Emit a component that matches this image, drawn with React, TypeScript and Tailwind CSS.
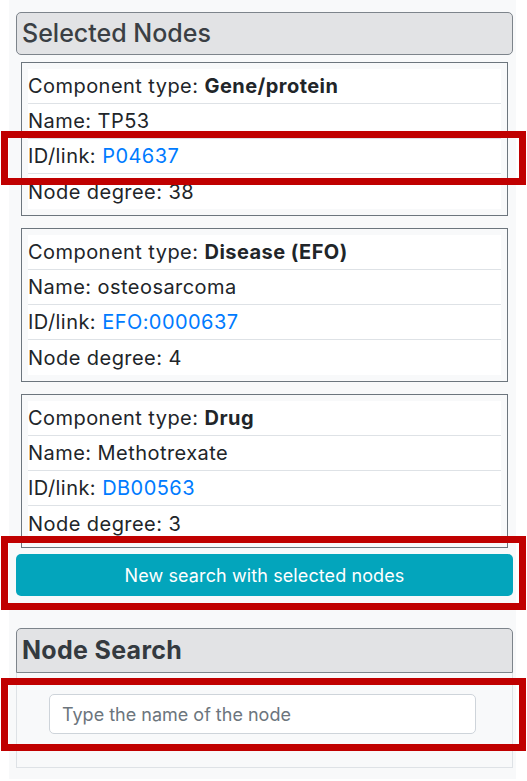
import React from "react";

type Row = { label: string; value: string; kind?: "bold" | "link" };

const nodes: Row[][] = [
  [
    { label: "Component type:", value: "Gene/protein", kind: "bold" },
    { label: "Name:", value: "TP53" },
    { label: "ID/link:", value: "P04637", kind: "link" },
    { label: "Node degree:", value: "38" },
  ],
  [
    { label: "Component type:", value: "Disease (EFO)", kind: "bold" },
    { label: "Name:", value: "osteosarcoma" },
    { label: "ID/link:", value: "EFO:0000637", kind: "link" },
    { label: "Node degree:", value: "4" },
  ],
  [
    { label: "Component type:", value: "Drug", kind: "bold" },
    { label: "Name:", value: "Methotrexate" },
    { label: "ID/link:", value: "DB00563", kind: "link" },
    { label: "Node degree:", value: "3" },
  ],
];

function NodeCard({ rows }: { rows: Row[] }) {
  return (
    <div className="border border-[#6c757d] bg-[#f8f9fa] px-[6px] py-[6px]">
      {rows.map((r, i) => (
        <div
          key={i}
          className={`h-[35px] bg-white flex items-center whitespace-nowrap text-[20px] tracking-[0.45px] text-[#212529] ${
            i < rows.length - 1 ? "border-b border-[#dee2e6]" : ""
          }`}
        >
          <span>{r.label}&nbsp;</span>
          {r.kind === "bold" && <b className="font-bold">{r.value}</b>}
          {r.kind === "link" && <a className="text-[#007bff]">{r.value}</a>}
          {!r.kind && <span>{r.value}</span>}
        </div>
      ))}
    </div>
  );
}

// red highlight frames drawn over the screenshot
function Mark({ top, height }: { top: number; height: number }) {
  return (
    <div
      className="absolute left-[1px] w-[525px] border-[7px] border-[#c00000] pointer-events-none"
      style={{ top, height }}
    />
  );
}

export default function App() {
  return (
    <div className="relative w-[527px] h-[781px] bg-white font-['Inter',sans-serif]">
      <div className="ml-[9px] w-[507px] h-[779px] bg-[#f8f9fa] pt-3 pl-[7px]">
        <div className="w-[497px]">
          <div className="h-[43px] rounded-[5px] border border-[#7d848b] bg-[#e2e3e5] pl-[5px] flex items-center">
            <h2 className="text-[25px] font-medium text-[#3a3f44] leading-none">Selected Nodes</h2>
          </div>
          <div className="pl-[5px] pr-[5px] pt-[7px] flex flex-col gap-[12px]">
            {nodes.map((rows, i) => (
              <NodeCard key={i} rows={rows} />
            ))}
          </div>
          <button className="mt-[6px] w-[497px] h-[42px] rounded-[5px] bg-[#03a5bc] text-white text-[18px] tracking-[0.1px]">
            New search with selected nodes
          </button>
          <div className="mt-[32px] h-[45px] rounded-t-[5px] border border-[#7d848b] bg-[#e2e3e5] pl-[5px] flex items-center">
            <h2 className="text-[25px] font-bold text-[#343a40] leading-none tracking-[0.3px]">Node Search</h2>
          </div>
          <div className="h-[95px] border border-t-0 border-[#dee2e6] pt-[21px] pl-[32px]">
            <input
              className="w-[427px] h-[40px] rounded-[5px] border border-[#ced4da] bg-white px-3 text-[18px] text-[#495057] placeholder:text-[#6c757d] outline-none"
              placeholder="Type the name of the node"
            />
          </div>
        </div>
      </div>
      <Mark top={131} height={54} />
      <Mark top={536} height={74} />
      <Mark top={678} height={73} />
    </div>
  );
}
